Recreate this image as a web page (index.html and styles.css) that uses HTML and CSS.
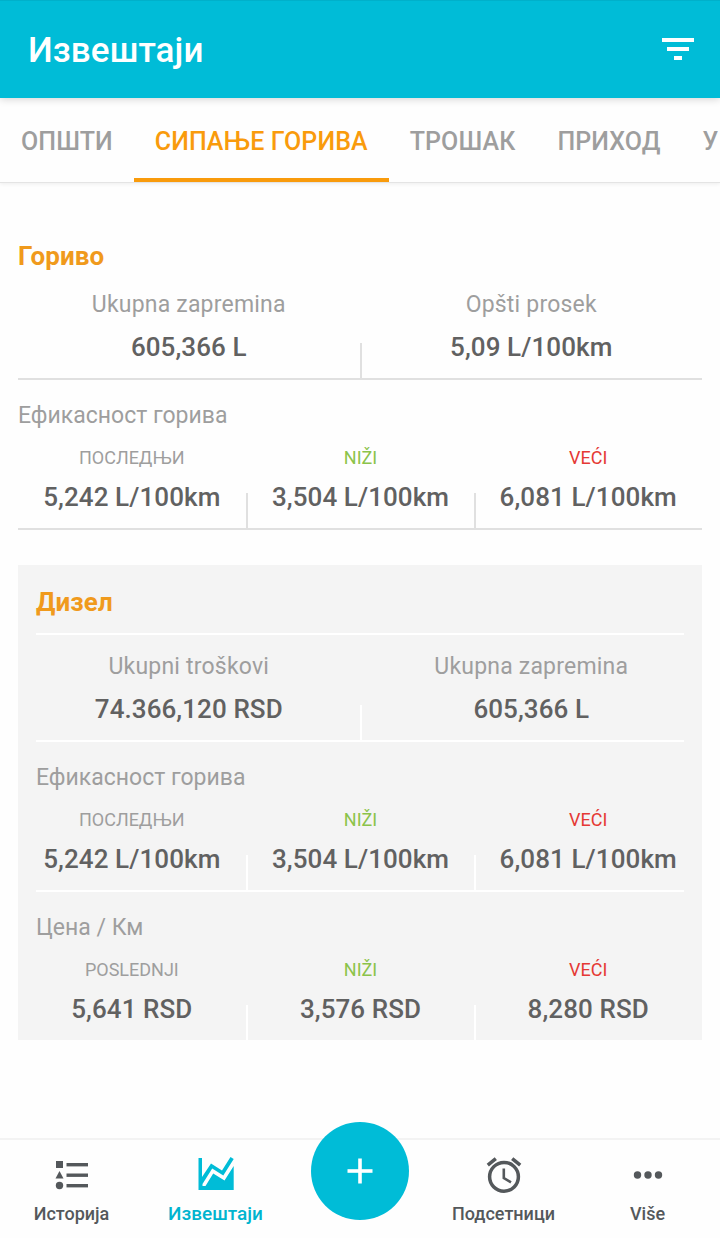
FILE: index.html
```
<!DOCTYPE html>
<html lang="sr">
<head>
  <meta charset="UTF-8">
  <meta name="viewport" content="width=device-width, initial-scale=1">
  <title>Извештаји</title>
  <link rel="stylesheet" href="styles.css">
</head>
<body>

<header class="topbar">
  <h1>Извештаји</h1>
  <svg class="filter" width="32" height="24" viewBox="0 0 32 24" fill="#fff">
    <rect x="0" y="1" width="32" height="4"/>
    <rect x="5" y="10" width="22" height="4"/>
    <rect x="12" y="19" width="8" height="4"/>
  </svg>
</header>

<nav class="tabs">
  <a class="tab">ОПШТИ</a>
  <a class="tab active">СИПАЊЕ ГОРИВА</a>
  <a class="tab">ТРОШАК</a>
  <a class="tab">ПРИХОД</a>
  <a class="tab">У</a>
</nav>

<main>
  <section class="report">
    <h2>Гориво</h2>
    <div class="row totals">
      <div class="cell"><span class="label">Ukupna zapremina</span><strong>605,366 L</strong></div>
      <div class="cell"><span class="label">Opšti prosek</span><strong>5,09 L/100km</strong></div>
    </div>
    <h3>Ефикасност горива</h3>
    <div class="row">
      <div class="cell"><span class="tag">ПОСЛЕДЊИ</span><strong>5,242 L/100km</strong></div>
      <div class="cell"><span class="tag low">NIŽI</span><strong>3,504 L/100km</strong></div>
      <div class="cell"><span class="tag high">VEĆI</span><strong>6,081 L/100km</strong></div>
    </div>
  </section>

  <section class="report card">
    <h2>Дизел</h2>
    <div class="row totals">
      <div class="cell"><span class="label">Ukupni troškovi</span><strong>74.366,120 RSD</strong></div>
      <div class="cell"><span class="label">Ukupna zapremina</span><strong>605,366 L</strong></div>
    </div>
    <h3>Ефикасност горива</h3>
    <div class="row">
      <div class="cell"><span class="tag">ПОСЛЕДЊИ</span><strong>5,242 L/100km</strong></div>
      <div class="cell"><span class="tag low">NIŽI</span><strong>3,504 L/100km</strong></div>
      <div class="cell"><span class="tag high">VEĆI</span><strong>6,081 L/100km</strong></div>
    </div>
    <h3>Цена / Км</h3>
    <div class="row last">
      <div class="cell"><span class="tag">POSLEDNJI</span><strong>5,641 RSD</strong></div>
      <div class="cell"><span class="tag low">NIŽI</span><strong>3,576 RSD</strong></div>
      <div class="cell"><span class="tag high">VEĆI</span><strong>8,280 RSD</strong></div>
    </div>
  </section>
</main>

<nav class="bottombar">
  <a class="item">
    <svg width="36" height="36" viewBox="0 0 36 36" fill="#54585b">
      <rect x="2" y="4" width="7" height="7"/>
      <path d="M5.5 14 L9.5 21.5 H1.5 Z"/>
      <circle cx="5.5" cy="28.5" r="3.7"/>
      <rect x="12.5" y="6" width="21.5" height="3.4"/>
      <rect x="12.5" y="16.5" width="21.5" height="3.4"/>
      <rect x="12.5" y="27" width="21.5" height="3.4"/>
    </svg>
    <span>Историја</span>
  </a>
  <a class="item active">
    <svg width="36" height="36" viewBox="0 0 36 36" fill="#00bcd7">
      <path d="M.5 1 H4 V20 L13 6.5 L24 13.5 L32.5 0 L35.7 2 L25.3 18.6 L14.2 11.5 L4.5 27 V29 H7.5 L15.2 16.5 L26.5 23.5 L35.7 9 V33 H.5 Z"/>
    </svg>
    <span>Извештаји</span>
  </a>
  <a class="add">
    <svg width="26" height="26" viewBox="0 0 26 26" fill="#fff">
      <rect x="11.2" y="0.5" width="3.6" height="25"/>
      <rect x="0.5" y="11.2" width="25" height="3.6"/>
    </svg>
  </a>
  <a class="item">
    <svg width="36" height="36" viewBox="0 0 36 36" fill="none" stroke="#54585b">
      <circle cx="18" cy="19.8" r="14.4" stroke-width="3.5"/>
      <path d="M17.8 11.5 V21 L25 25.3" stroke-width="2.6"/>
      <path d="M1.8 8.2 L9.8 1.6 M34.2 8.2 L26.2 1.6" stroke-width="3.5"/>
    </svg>
    <span>Подсетници</span>
  </a>
  <a class="item">
    <svg width="36" height="36" viewBox="0 0 36 36" fill="#54585b">
      <circle cx="7.5" cy="18" r="3.7"/>
      <circle cx="18" cy="18" r="3.7"/>
      <circle cx="28.5" cy="18" r="3.7"/>
    </svg>
    <span>Više</span>
  </a>
</nav>

</body>
</html>
```
FILE: styles.css
```
* {
  box-sizing: border-box;
}

body {
  margin: 0;
  height: 1238px;
  display: flex;
  flex-direction: column;
  overflow: hidden;
  background-color: #fefefe;
  font-family: Roboto, sans-serif;
  color: #616161;
}

h1, h2, h3 {
  margin: 0;
}

.topbar {
  height: 98px;
  flex: none;
  display: flex;
  align-items: center;
  justify-content: space-between;
  padding: 2px 26px 0 28px;
  background-color: #00bcd7;
  border-top: 1px solid #00b0ca;
  box-shadow: 0 1px 8px rgba(0,0,0,0.18);
  z-index: 1;
}

.topbar h1 {
  color: #fff;
  font-size: 35px;
  font-weight: 500;
  letter-spacing: 0.1px;
}

.filter {
  margin-bottom: 4px;
}

.tabs {
  height: 85px;
  flex: none;
  display: flex;
  overflow: hidden;
  border-bottom: 1px solid #e4e4e4;
  box-shadow: 0 1px 4px rgba(0,0,0,0.07);
}

.tab {
  flex: none;
  padding: 0 21px;
  line-height: 88px;
  font-size: 25px;
  font-weight: 500;
  letter-spacing: 0.1px;
  color: #9e9e9e;
}

.tab.active {
  color: #f99b0c;
  border-bottom: 4px solid #f99b0c;
}

main {
  flex: 1;
  padding: 54px 18px 0;
}

.report h2 {
  font-size: 26px;
  line-height: 38px;
  height: 40px;
  font-weight: 700;
  letter-spacing: 0.1px;
  color: #f09a1c;
}

.report h3 {
  height: 56px;
  padding-top: 21px;
  font-size: 23px;
  line-height: 30px;
  font-weight: 400;
  color: #9e9e9e;
}

.row {
  display: flex;
  height: 94px;
  border-bottom: 2px solid #e0e0e0;
}

.cell {
  flex: 1;
  display: flex;
  flex-direction: column;
  align-items: center;
  padding: 8px 1px 0 0;
  position: relative;
}

/* short divider between the cells */
.cell + .cell::before {
  content: "";
  position: absolute;
  left: -1px;
  bottom: 0;
  width: 2px;
  height: 35px;
  background-color: #e0e0e0;
}

.cell + .cell {
  padding-right: 0;
}

.cell:nth-child(3)::before {
  left: 0;
}

.tag {
  font-size: 18px;
  line-height: 28px;
  color: #9e9e9e;
}

.low {
  color: #8bc34a;
}

.high {
  color: #e53935;
}

.cell strong {
  margin-top: 7px;
  font-size: 26px;
  line-height: 36px;
  font-weight: 500;
  letter-spacing: 0.08px;
}

.totals {
  height: 103px;
}

.totals .cell strong {
  margin-top: 4px;
}

.label {
  font-size: 23px;
  line-height: 40px;
  letter-spacing: 0.2px;
  color: #9e9e9e;
}

.card {
  height: 475px;
  margin-top: 35px;
  background-color: #f4f4f4;
}

.card h2 {
  height: 70px;
  margin: 0 18px;
  padding-top: 18px;
  border-bottom: 2px solid #fff;
}

.card h3 {
  padding-left: 18px;
}

.card .row {
  border-bottom: 0;
  padding-bottom: 2px;
  background: linear-gradient(#fff, #fff) center bottom / 648px 2px no-repeat;
}

.card .totals {
  height: 107px;
  padding-top: 4px;
}

.card .last {
  height: 92px;
  padding-bottom: 0;
  background: none;
}

.card .cell + .cell::before {
  background-color: #fff;
}

.bottombar {
  height: 100px;
  flex: none;
  display: flex;
  border-top: 2px solid #f3f3f3;
}

.item, .add {
  width: 144px;
  display: flex;
  flex-direction: column;
  align-items: center;
}

.item {
  padding-top: 17px;
  font-size: 18px;
  line-height: 24px;
  font-weight: 500;
  color: #54585b;
}

.item span {
  margin: 9px 1px 0 0;
}

.item.active {
  color: #00b4cf;
}

.item.active span {
  font-size: 19px;
}

.add {
  width: 98px;
  height: 98px;
  margin: -18px 23px 0;
  justify-content: center;
  border-radius: 50%;
  background-color: #00bcd7;
}
```
